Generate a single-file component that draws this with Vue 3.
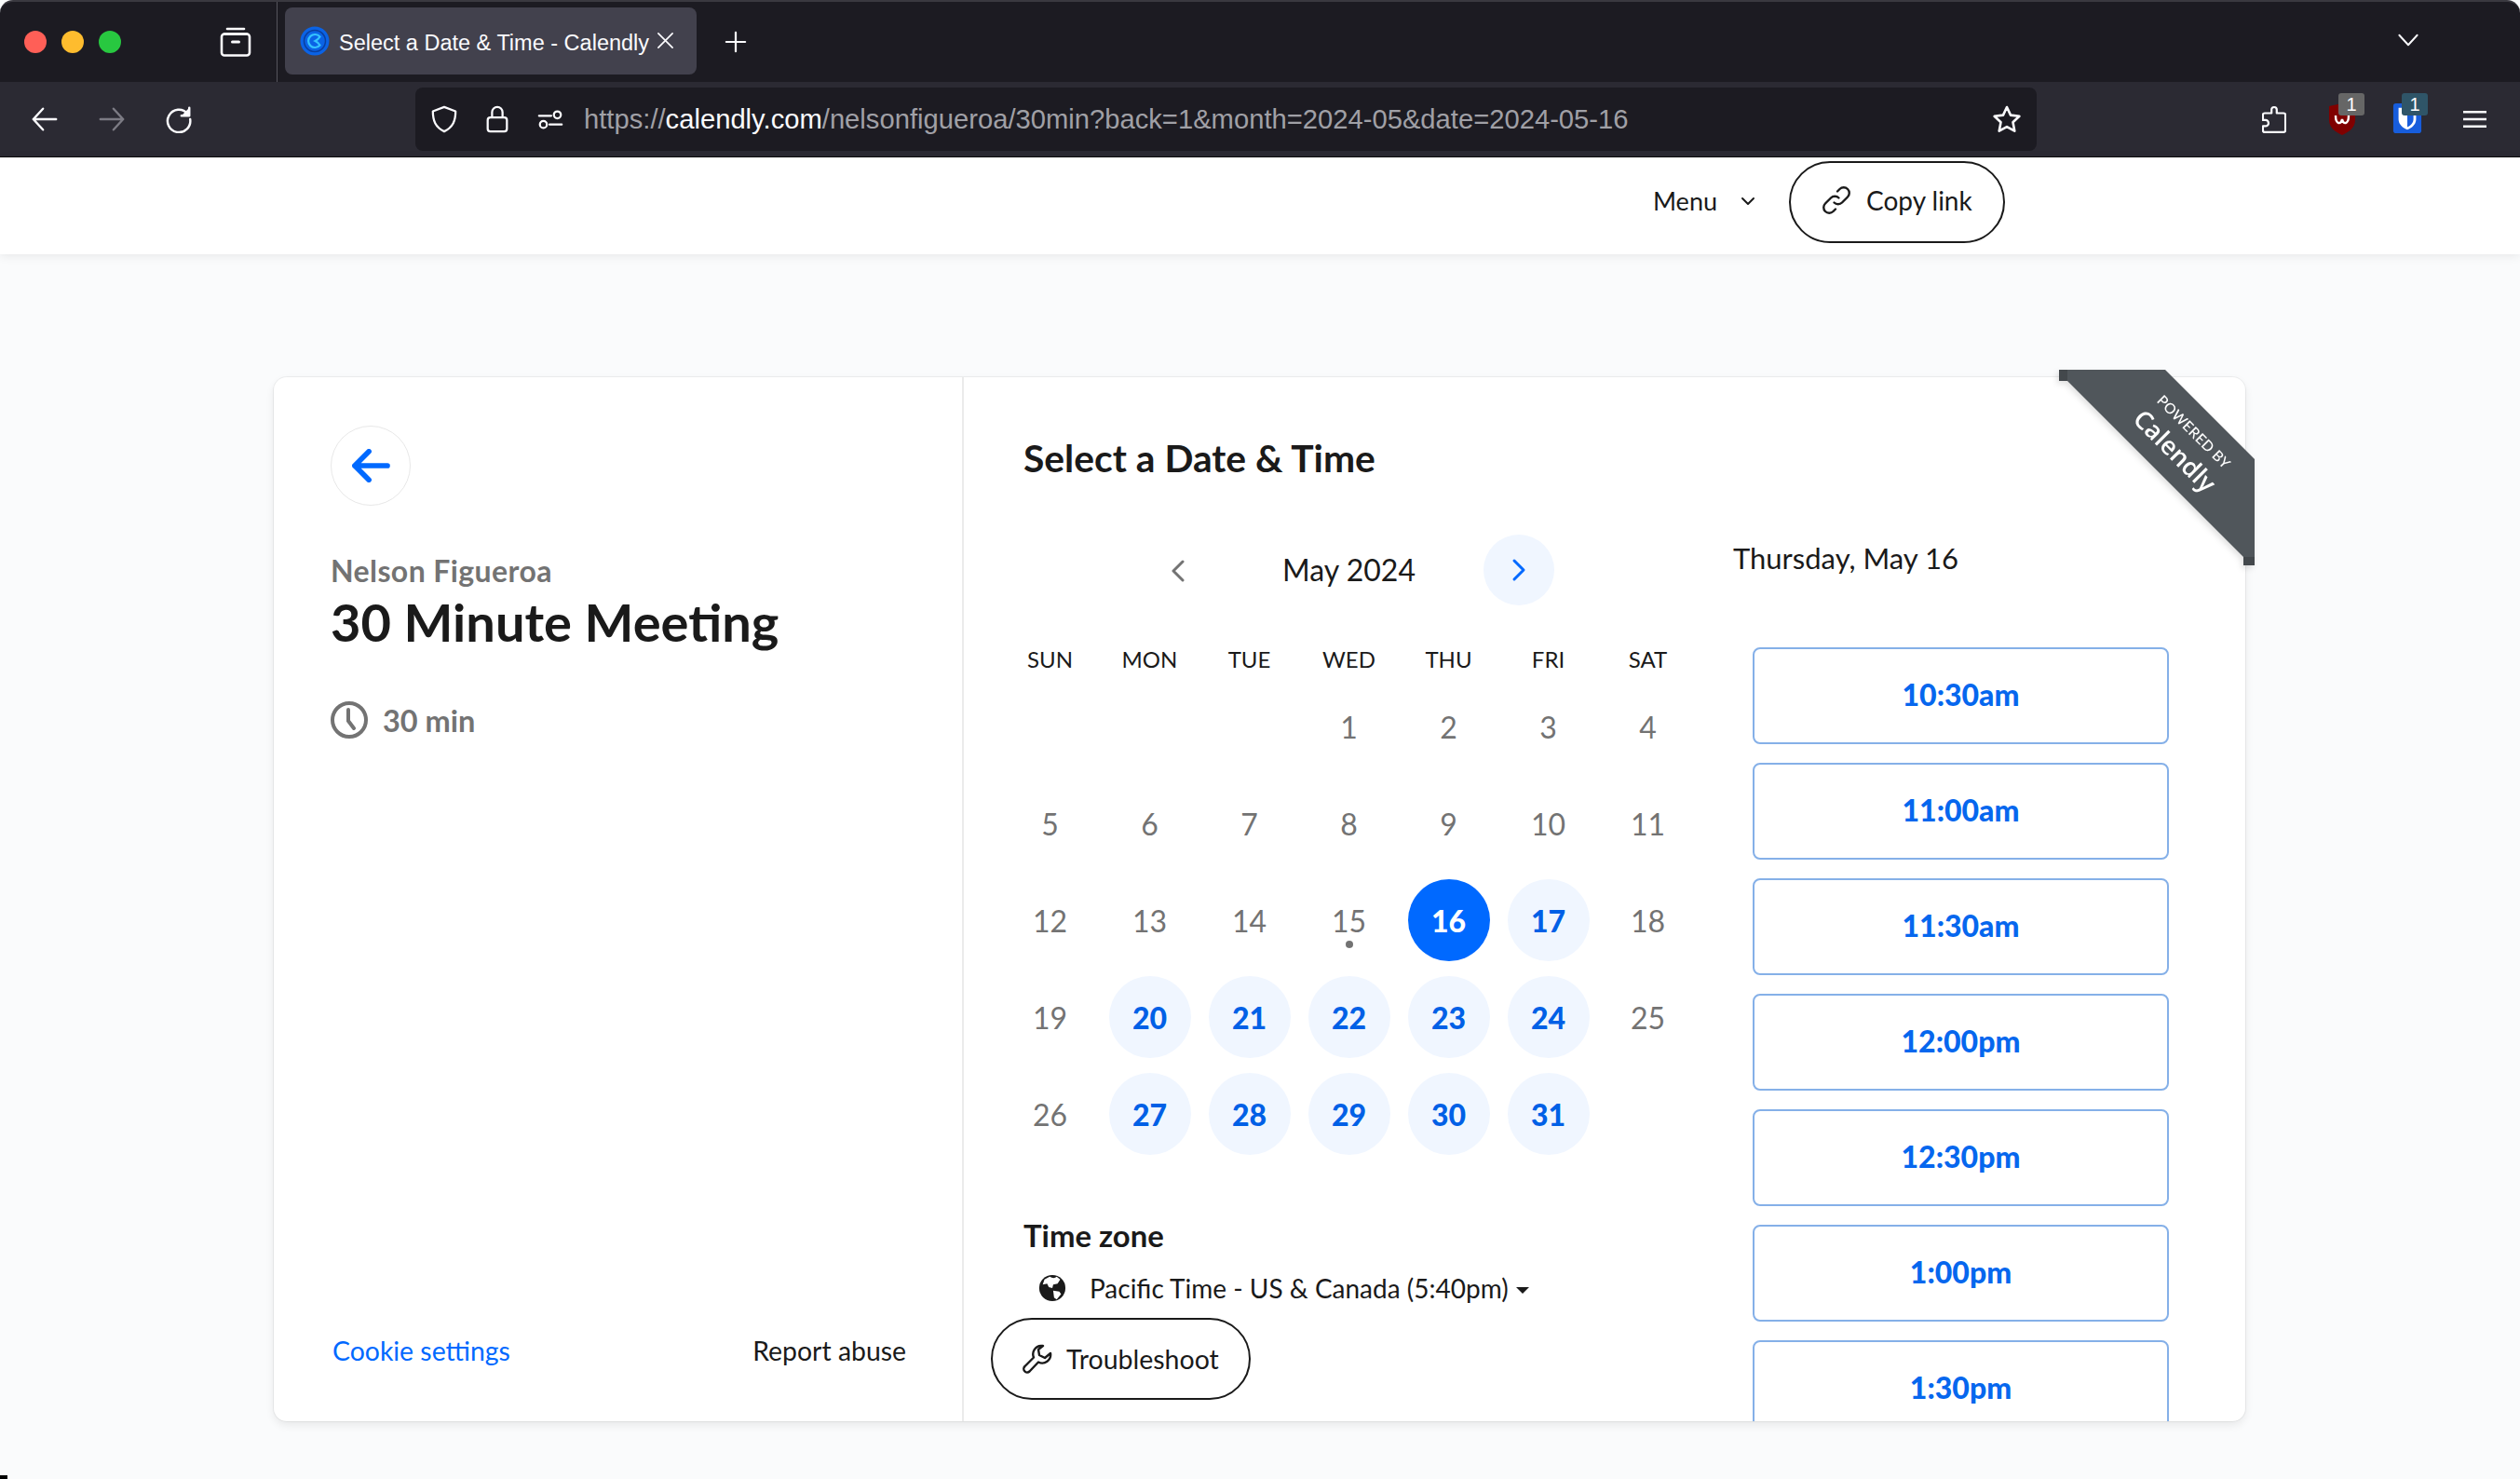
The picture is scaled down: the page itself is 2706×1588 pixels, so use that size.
<template>
  <div class="window">
    <div class="tabbar">
      <div class="traffic">
        <span class="dot red"></span>
        <span class="dot yellow"></span>
        <span class="dot green"></span>
      </div>
      <svg class="tab-manager" viewBox="0 0 34 34" fill="none" stroke="#fbfbfe" stroke-width="2.6" stroke-linecap="round" stroke-linejoin="round">
        <path d="M8 3h18" />
        <path d="M5 8.500h24" />
        <rect x="2" y="8.500" width="30" height="23" rx="3" />
        <path d="M13.500 17h7" stroke-width="3" />
      </svg>
      <div class="tab-sep"></div>
      <div class="tab">
        <svg class="favicon" viewBox="0 0 32 32" fill="none">
          <circle cx="16" cy="16" r="15.500" fill="#0b63e5" />
          <circle cx="16" cy="16" r="11.500" stroke="#0a3f9e" stroke-width="1.500" />
          <path d="M21.500 11.500a7 7 0 1 0 0 9c-1.500-2.500-3-3.500-5-4.500 2-1 3.500-2 5-4.500z" stroke="#35c3ff" stroke-width="2.200" />
        </svg>
        <span class="tab-title">Select a Date &amp; Time - Calendly</span>
        <svg class="tab-close" viewBox="0 0 20 20" stroke="#fbfbfe" stroke-width="1.800" stroke-linecap="round">
          <path d="M2 2l16 16M18 2L2 18" />
        </svg>
      </div>
      <svg class="new-tab" viewBox="0 0 26 26" stroke="#fbfbfe" stroke-width="2.400" stroke-linecap="round">
        <path d="M13 2v22M2 13h22" />
      </svg>
      <svg class="tab-list" viewBox="0 0 26 16" fill="none" stroke="#fbfbfe" stroke-width="2.200" stroke-linecap="round" stroke-linejoin="round">
        <path d="M2 2l11 12L24 2" />
      </svg>
    </div>

    <div class="toolbar">
      <svg class="nav-icon" viewBox="0 0 32 32" fill="none" stroke="#fbfbfe" stroke-width="2.600" stroke-linecap="round" stroke-linejoin="round">
        <path d="M29 16H3M14 4L3 16l11 12" />
      </svg>
      <svg class="nav-icon" viewBox="0 0 32 32" fill="none" stroke="#7c7b84" stroke-width="2.600" stroke-linecap="round" stroke-linejoin="round">
        <path d="M3 16h26M18 4l11 12-11 12" />
      </svg>
      <svg class="nav-icon" viewBox="0 0 32 32" fill="none" stroke="#fbfbfe" stroke-width="2.600" stroke-linecap="round" stroke-linejoin="round">
        <path d="M26 9.500A13 13 0 1 0 29 16" />
        <path d="M28 3v9h-9" fill="#fbfbfe" />
      </svg>

      <div class="urlbar">
        <svg class="url-icon" viewBox="0 0 32 32" fill="none" stroke="#fbfbfe" stroke-width="2.400" stroke-linejoin="round">
          <path d="M16 2l13 5c0 11-3 18-13 23C6 25 3 18 3 7z" />
        </svg>
        <svg class="url-icon" viewBox="0 0 32 32" fill="none" stroke="#fbfbfe" stroke-width="2.400" stroke-linejoin="round">
          <rect x="5" y="14" width="22" height="16" rx="3" />
          <path d="M10 14V8a6 6 0 0 1 12 0v6" />
        </svg>
        <svg class="url-icon" viewBox="0 0 32 32" fill="none" stroke="#fbfbfe" stroke-width="2.400" stroke-linecap="round">
          <path d="M3 12h14M15 22h14" />
          <circle cx="24" cy="11" r="4" />
          <circle cx="8" cy="22" r="4" />
        </svg>
        <div class="url-text">
          <span class="url-dim">https://</span><span class="url-host">calendly.com</span><span class="url-dim">/nelsonfigueroa/30min?back=1&amp;month=2024-05&amp;date=2024-05-16</span>
        </div>
        <svg class="url-star" viewBox="0 0 32 32" fill="none" stroke="#fbfbfe" stroke-width="2.600" stroke-linejoin="round">
          <path d="M16 3l4 8.600 9.400 1.200-6.900 6.500 1.800 9.400L16 24.100l-8.300 4.600 1.800-9.400-6.900-6.500L12 11.600z" />
        </svg>
      </div>

      <div class="extensions">
        <svg class="ext-puzzle" viewBox="0 0 28 32" fill="none" stroke="#fbfbfe" stroke-width="2.400" stroke-linejoin="round">
          <path d="M11 9V5a3 3 0 0 1 6 0v4h8a2 2 0 0 1 2 2v18a2 2 0 0 1-2 2H3a2 2 0 0 1-2-2v-5h3a3.500 3.500 0 0 0 0-7H1v-6a2 2 0 0 1 2-2z" />
        </svg>
        <div class="ext shield-ext">
          <svg viewBox="0 0 28 34" class="ext-shield">
            <path d="M0 3l14-3 14 3v15c0 8-7 13-14 16C7 31 0 26 0 18z" fill="#800000" />
            <path d="M7 13c0 10 6 10 7 4 1 6 7 6 7-4" fill="none" stroke="#fff" stroke-width="2.400" />
          </svg>
          <span class="badge grey">1</span>
        </div>
        <div class="ext bit-ext">
          <svg viewBox="0 0 32 34" class="ext-bitwarden">
            <rect width="32" height="34" rx="3" fill="#175ddc" />
            <path d="M6 5h20v13c0 6-5 10-10 12C11 28 6 24 6 18z" fill="#fff" />
            <path d="M16 8h7v10c0 4-3 7-7 9z" fill="#175ddc" />
          </svg>
          <span class="badge teal">1</span>
        </div>
        <svg class="hamburger" viewBox="0 0 26 22" stroke="#fbfbfe" stroke-width="2.600">
          <path d="M0 3h26M0 11h26M0 19h26" />
        </svg>
      </div>
    </div>

    <div class="page">
      <header class="site-header">
        <div class="menu">
          <span>Menu</span>
          <svg class="menu-caret" viewBox="0 0 16 10" fill="none" stroke="#1a1a1a" stroke-width="2" stroke-linecap="round" stroke-linejoin="round">
            <path d="M2 2l6 6 6-6" />
          </svg>
        </div>
        <button class="pill copy">
          <svg class="pill-icon" viewBox="0 0 32 32" fill="none" stroke="#1a1a1a" stroke-width="2.400" stroke-linecap="round" stroke-linejoin="round">
            <path d="M13.500 18.500a6 6 0 0 0 8.500 0l6-6a6 6 0 0 0-8.500-8.500l-2.500 2.500" />
            <path d="M18.500 13.500a6 6 0 0 0-8.500 0l-6 6a6 6 0 0 0 8.500 8.500l2.500-2.500" />
          </svg>
          Copy link
        </button>
      </header>

      <main class="card">
        <div class="ribbon">
          <svg class="ribbon-shape" viewBox="0 0 210 210">
            <path d="M0 0h114l96 96v114h-12v-9L9 12H0z" fill="#50565b" />
            <path d="M0 0h9v12H0zM198 201h12v9h-12z" fill="#43484c" />
          </svg>
          <div class="ribbon-text">
            <span class="ribbon-small">POWERED BY</span>
            <span class="ribbon-big">Calendly</span>
          </div>
        </div>

        <aside class="details">
          <div class="back">
            <svg viewBox="0 0 44 38" fill="none" stroke="#0069ff" stroke-width="6" stroke-linecap="round" stroke-linejoin="round">
              <path d="M41 19H4M20 3L4 19l16 16" />
            </svg>
          </div>
          <div class="host">Nelson Figueroa</div>
          <h1 class="event-name">30 Minute Meeting</h1>
          <div class="duration">
            <svg class="clock" viewBox="0 0 40 40" fill="none" stroke="#737373" stroke-width="4" stroke-linecap="round">
              <circle cx="20" cy="20" r="18" />
              <path d="M19 9v12l6 8" />
            </svg>
            <span>30 min</span>
          </div>
          <div class="details-foot">
            <span class="cookie">Cookie settings</span>
            <span class="report">Report abuse</span>
          </div>
        </aside>

        <section class="booking">
          <h2 class="select-title">Select a Date &amp; Time</h2>
          <div class="booking-body">
            <div class="calendar">
              <div class="month-nav">
                <svg class="chev" viewBox="0 0 16 26" fill="none" stroke="#737373" stroke-width="3" stroke-linecap="round" stroke-linejoin="round">
                  <path d="M13 3L3 13l10 10" />
                </svg>
                <span class="month">May 2024</span>
                <span class="next">
                  <svg class="chev" viewBox="0 0 16 26" fill="none" stroke="#0069ff" stroke-width="3" stroke-linecap="round" stroke-linejoin="round">
                    <path d="M3 3l10 10L3 23" />
                  </svg>
                </span>
              </div>
              <div class="grid weekdays">
                <span v-for="d in weekdays" :key="d">{{ d }}</span>
              </div>
              <div class="grid days">
                <span
                  v-for="(c, i) in cells"
                  :key="i"
                  class="day"
                  :class="{ open: c.open, selected: c.selected, today: c.today }"
                >{{ c.label }}</span>
              </div>
              <div class="tz-title">Time zone</div>
              <div class="tz-row">
                <svg class="globe" viewBox="0 0 32 32">
                  <circle cx="16" cy="16" r="15" fill="#1a1a1a" />
                  <path d="M13 3c3 2 6 2 8 0l4 3-3 5-5 1-1 4-4-1-2-4-5 1 2-6zM17 19l7 1 2 3-5 6-3-2z" fill="#fff" />
                </svg>
                <span>Pacific Time - US &amp; Canada (5:40pm)</span>
                <span class="tz-caret"></span>
              </div>
              <button class="pill trouble">
                <svg class="pill-icon" viewBox="0 0 32 32" fill="none" stroke="#1a1a1a" stroke-width="2.400" stroke-linejoin="round">
                  <path d="M20 2a9 9 0 0 0-8 12.500L2.500 24a3.500 3.500 0 0 0 5 5.500l9.500-10A9 9 0 0 0 30 10l-6 5-6-3-1-6 5-4z" />
                </svg>
                Troubleshoot
              </button>
            </div>
            <div class="times">
              <div class="selected-date">Thursday, May 16</div>
              <div class="slots">
                <div v-for="t in slots" :key="t" class="slot">{{ t }}</div>
              </div>
            </div>
          </div>
        </section>
      </main>
    </div>
    <div class="corner-mark"></div>
  </div>
</template>

<script setup>
const weekdays = ["SUN", "MON", "TUE", "WED", "THU", "FRI", "SAT"];
const slots = ["10:30am", "11:00am", "11:30am", "12:00pm", "12:30pm", "1:00pm", "1:30pm"];

// May 2024 starts on a Wednesday
const openDays = [17, 20, 21, 22, 23, 24, 27, 28, 29, 30, 31];
const cells = [
  { label: "" },
  { label: "" },
  { label: "" },
];
for (let d = 1; d <= 31; d++) {
  cells.push({
    label: d,
    open: openDays.includes(d),
    selected: d === 16,
    today: d === 15,
  });
}
</script>

<style>
html,
body {
  margin: 0;
  background: #fafbfc;
}
</style>

<style scoped>
.window {
  position: relative;
  width: 2706px;
  height: 1588px;
  overflow: hidden;
  background: #fafbfc;
  font-family: Lato, "Open Sans", sans-serif;
  color: #1a1a1a;
}

/* browser chrome */
.tabbar {
  height: 88px;
  box-sizing: border-box;
  background: #1c1b22;
  border-top: 2px solid #3a3940;
  border-radius: 14px 14px 0 0;
  display: flex;
  align-items: center;
  position: relative;
}
.traffic {
  display: flex;
  gap: 16px;
  margin-left: 26px;
}
.dot {
  width: 24px;
  height: 24px;
  border-radius: 50%;
}
.red { background: #ff5f57; }
.yellow { background: #febc2e; }
.green { background: #28c840; }
.tab-manager {
  width: 34px;
  height: 34px;
  margin-left: 106px;
}
.tab-sep {
  width: 1px;
  height: 86px;
  background: #55545c;
  margin-left: 27px;
}
.tab {
  width: 442px;
  height: 72px;
  margin-left: 8px;
  margin-top: -2px;
  background: #42414d;
  border-radius: 8px;
  display: flex;
  align-items: center;
  box-sizing: border-box;
  padding: 4px 0 0 16px;
}
.favicon {
  width: 32px;
  height: 32px;
  flex: none;
  margin-top: -4px;
}
.tab-title {
  margin-left: 10px;
  font-family: "Liberation Sans", Arial, sans-serif;
  font-size: 23.500px;
  color: #fbfbfe;
  white-space: nowrap;
}
.tab-close {
  width: 19px;
  height: 19px;
  margin: -6px 0 0 8px;
  flex: none;
}
.new-tab {
  width: 24px;
  height: 24px;
  margin-left: 30px;
}
.tab-list {
  position: absolute;
  left: 2574px;
  top: 34px;
  width: 24px;
  height: 14px;
}
.toolbar {
  height: 81px;
  box-sizing: border-box;
  border-bottom: 1px solid #0c0c0d;
  background: #2b2a33;
  display: flex;
  align-items: center;
  padding-left: 33px;
}
.nav-icon {
  width: 30px;
  height: 30px;
  margin-right: 42px;
  flex: none;
}
.urlbar {
  width: 1741px;
  height: 68px;
  margin-left: 197px;
  background: #1c1b22;
  border-radius: 8px;
  display: flex;
  align-items: center;
  box-sizing: border-box;
  padding-left: 16px;
  position: relative;
  flex: none;
}
.url-icon {
  width: 30px;
  height: 30px;
  margin-right: 27px;
  flex: none;
}
.url-text {
  font-family: "Liberation Sans", Arial, sans-serif;
  font-size: 29.200px;
  white-space: nowrap;
  margin: 1px 0 0 -6px;
}
.url-dim { color: #a0a0a6; }
.url-host { color: #fbfbfe; }
.url-star {
  position: absolute;
  right: 16px;
  top: 18px;
  width: 32px;
  height: 32px;
}
.extensions {
  display: flex;
  align-items: center;
  margin-left: 242px;
}
.ext-puzzle {
  width: 26px;
  height: 32px;
}
.ext {
  position: relative;
  width: 34px;
  height: 34px;
}
.shield-ext { margin-left: 46px; }
.bit-ext { margin-left: 34px; }
.ext-shield {
  width: 28px;
  height: 34px;
  display: block;
}
.ext-bitwarden {
  width: 32px;
  height: 32px;
  display: block;
}
.badge {
  position: absolute;
  top: -11px;
  left: 10px;
  width: 28px;
  height: 24px;
  border-radius: 3px;
  color: #fff;
  font-family: "Liberation Sans", Arial, sans-serif;
  font-size: 20px;
  line-height: 24px;
  text-align: center;
}
.badge.grey { background: #666; }
.badge.teal { background: #2f5568; }
.hamburger {
  width: 25px;
  height: 22px;
  margin-left: 42px;
}

/* page */
.page {
  height: 1419px;
  position: relative;
}
.site-header {
  height: 104px;
  box-sizing: border-box;
  padding-bottom: 9px;
  background: #fff;
  box-shadow: 0 2px 10px rgba(0, 0, 0, 0.08);
  display: flex;
  align-items: center;
  justify-content: flex-end;
  padding-right: 553px;
  position: relative;
}
.menu {
  display: flex;
  align-items: center;
  font-size: 27px;
  margin: 0 36px 2px 0;
}
.menu-caret {
  width: 16px;
  height: 10px;
  margin-left: 25px;
}
.pill {
  display: inline-flex;
  align-items: center;
  box-sizing: border-box;
  height: 88px;
  background: #fff;
  border: 2px solid #1a1a1a;
  border-radius: 44px;
  font-family: inherit;
  font-size: 28px;
  color: #1a1a1a;
  padding: 0;
}
.pill-icon {
  width: 32px;
  height: 32px;
  flex: none;
}
.copy {
  width: 232px;
  padding: 0 0 3px 33px;
  gap: 16px;
}
.card {
  position: absolute;
  left: 294px;
  top: 236px;
  width: 2117px;
  height: 1121px;
  box-sizing: border-box;
  background: #fff;
  border-radius: 14px;
  box-shadow: 0 0 0 1px rgba(0, 0, 0, 0.05), 0 4px 10px rgba(0, 0, 0, 0.08);
  display: flex;
}
.ribbon {
  position: absolute;
  right: -10px;
  top: -8px;
  width: 210px;
  height: 210px;
  z-index: 2;
  filter: drop-shadow(-2px 3px 3px rgba(0, 0, 0, 0.12));
}
.ribbon-shape {
  width: 210px;
  height: 210px;
  display: block;
}
.ribbon-text {
  position: absolute;
  left: 57px;
  top: 54px;
  width: 150px;
  transform: rotate(45deg);
  color: #fff;
  display: flex;
  flex-direction: column;
  align-items: center;
}
.ribbon-small {
  font-size: 15.500px;
  font-weight: 500;
  line-height: 15px;
  letter-spacing: 0.3px;
  white-space: nowrap;
}
.ribbon-big {
  font-family: "Open Sans", sans-serif;
  font-size: 27px;
  line-height: 30px;
  font-weight: 600;
  margin-top: 6px;
}

.details {
  width: 741px;
  box-sizing: border-box;
  border-right: 2px solid #ebebeb;
  flex: none;
  padding: 52px 0 0 61px;
  position: relative;
}
.back {
  width: 86px;
  height: 86px;
  box-sizing: border-box;
  border: 1.500px solid #e8e8e8;
  border-radius: 50%;
  display: flex;
  align-items: center;
  justify-content: center;
}
.back svg {
  width: 44px;
  height: 36px;
}
.host {
  margin-top: 52px;
  font-size: 32px;
  letter-spacing: 0.4px;
  font-weight: 700;
  color: #737373;
  line-height: 36px;
}
.event-name {
  margin: 5px 0 0;
  font-size: 56px;
  font-weight: 700;
  line-height: 64px;
  color: #1a1a1a;
}
.duration {
  display: flex;
  align-items: center;
  margin-top: 53px;
  font-size: 32.500px;
  font-weight: 700;
  color: #737373;
}
.clock {
  width: 40px;
  height: 40px;
  margin-right: 16px;
}
.details-foot {
  position: absolute;
  left: 63px;
  right: 60px;
  top: 1028px;
  display: flex;
  justify-content: space-between;
  font-size: 28.400px;
}
.cookie { color: #0069ff; }

.booking {
  flex: 1;
  min-width: 0;
  overflow: hidden;
  border-radius: 0 14px 14px 0;
  box-sizing: border-box;
  padding: 0 0 0 64px;
}
.select-title {
  margin: 62px 0 0;
  font-size: 40.800px;
  line-height: 50px;
  font-weight: 700;
  color: #1a1a1a;
}
.booking-body {
  display: flex;
}
.calendar {
  width: 760px;
  margin-left: -25px;
  flex: none;
}
.month-nav {
  position: relative;
  height: 76px;
  margin-top: 57px;
  display: flex;
  align-items: center;
  justify-content: center;
  width: 749px;
}
.month {
  font-size: 32px;
  line-height: 76px;
}
.month-nav > .chev {
  position: absolute;
  left: 183px;
  top: 26px;
}
.chev {
  width: 16px;
  height: 26px;
}
.next {
  position: absolute;
  left: 519px;
  top: 0;
  width: 76px;
  height: 76px;
  border-radius: 50%;
  background: #f0f6ff;
  display: flex;
  align-items: center;
  justify-content: center;
}
.grid {
  display: grid;
  grid-template-columns: repeat(7, 107px);
  width: 749px;
}
.weekdays {
  margin-top: 38px;
  text-align: center;
  font-size: 24px;
  line-height: 40px;
}
.days {
  grid-auto-rows: 104px;
  margin-top: 0;
}
.day {
  width: 88px;
  height: 88px;
  justify-self: center;
  align-self: center;
  border-radius: 50%;
  display: flex;
  align-items: center;
  justify-content: center;
  font-size: 32px;
  color: #737373;
  position: relative;
}
.day.open {
  background: #f0f6ff;
  color: #0060e6;
  font-weight: 900;
}
.day.selected {
  background: #0069ff;
  color: #fff;
  font-weight: 900;
}
.day.today::after {
  content: "";
  position: absolute;
  left: 40px;
  top: 66px;
  width: 8px;
  height: 8px;
  border-radius: 50%;
  background: #737373;
}
.tz-title {
  margin: 59px 0 0 25px;
  font-size: 32.900px;
  font-weight: 700;
  line-height: 40px;
}
.tz-row {
  display: flex;
  align-items: center;
  margin: 16px 0 0 41px;
  font-size: 28px;
  line-height: 40px;
  color: #1a1a1a;
}
.globe {
  width: 30px;
  height: 30px;
  margin-right: 25px;
}
.tz-caret {
  margin: 4px 0 0 8px;
  border-left: 7px solid transparent;
  border-right: 7px solid transparent;
  border-top: 7px solid #1a1a1a;
}
.trouble {
  width: 279px;
  margin: 12px 0 0 -10px;
  padding-left: 32px;
  gap: 15px;
  border-width: 2px;
  font-size: 28.500px;
}
.times {
  margin-left: 48px;
  width: 447px;
  margin-top: 62px;
  flex: none;
}
.selected-date {
  font-size: 31px;
  line-height: 40px;
  margin-left: -21px;
  height: 82px;
}
.slots {
  display: flex;
  flex-direction: column;
  gap: 20px;
  margin-top: 34px;
}
.slot {
  height: 104px;
  flex: none;
  box-sizing: border-box;
  border: 2px solid #85b0e8;
  border-radius: 8px;
  padding-bottom: 3px;
  display: flex;
  align-items: center;
  justify-content: center;
  color: #0667ee;
  font-size: 32px;
  font-weight: 900;
}
.corner-mark {
  position: absolute;
  left: 0;
  bottom: 0;
  width: 8px;
  height: 4px;
  background: #000;
}
</style>
